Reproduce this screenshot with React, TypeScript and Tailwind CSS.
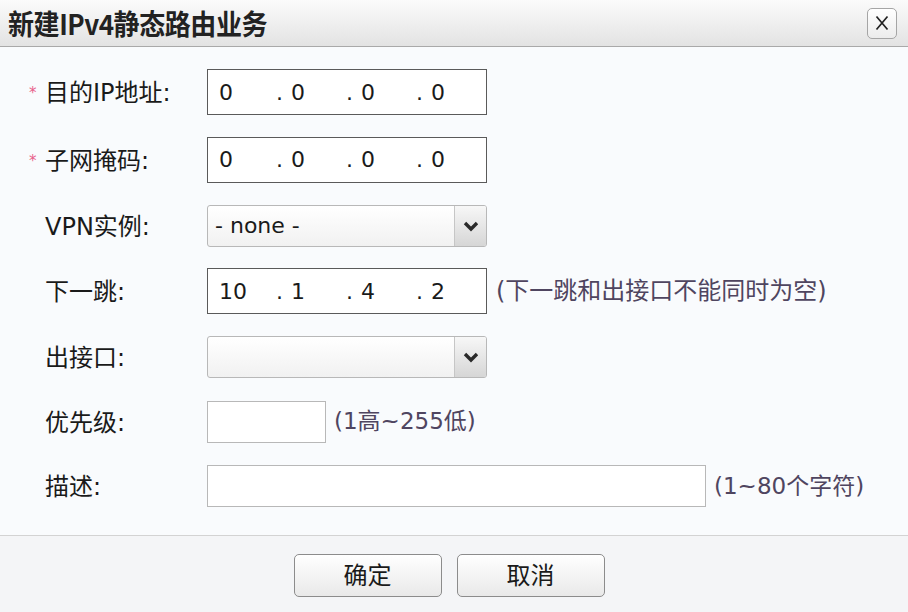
import React from "react";

const FONT = { fontFamily: '"DejaVu Sans", "Noto Sans CJK SC", sans-serif' };

function Chevron() {
  return (
    <svg width="16" height="12" viewBox="0 0 16 12">
      <path d="M2 3 L8 9 L14 3" fill="none" stroke="#2a2a2a" strokeWidth="3.4" strokeLinejoin="miter" />
    </svg>
  );
}

function IpInput({ parts }: { parts: string[] }) {
  return (
    <div className="flex h-[46px] w-[280px] items-center border border-[#5a5a5a] bg-white pl-[11px] text-[22px] text-[#1a1a1a]">
      <span className="w-[57px]">{parts[0]}</span>
      {parts.slice(1).map((p, i) => (
        <span key={i} className="flex w-[70px] items-center">
          <span className="w-[15px]">.</span>
          <span>{p}</span>
        </span>
      ))}
    </div>
  );
}

function Select({ value }: { value?: string }) {
  return (
    <div className="flex h-[42px] w-[280px] items-stretch overflow-hidden rounded-[3px] border border-[#b8b8b8] bg-gradient-to-b from-white to-[#f1f1f1]">
      <div className="flex flex-1 items-center pl-[7px] text-[22px] text-[#1a1a1a]">{value}</div>
      <div className="flex w-[32px] items-center justify-center border-l border-[#c6c6c6] bg-gradient-to-b from-[#f7f7f7] to-[#d6d6d6]">
        <Chevron />
      </div>
    </div>
  );
}

function Row({
  h,
  star,
  label,
  children,
}: {
  h: string;
  star?: boolean;
  label: string;
  children: React.ReactNode;
}) {
  return (
    <div className={`flex items-center ${h}`}>
      <div className="w-[17px] pl-[1px] pt-[3px] text-[15px] leading-none text-[#e8608a]">{star ? "*" : ""}</div>
      <div className="w-[162px] pt-[2px] text-[24px] text-[#1a1a1a]">{label}</div>
      {children}
    </div>
  );
}

export default function App() {
  return (
    <div className="flex h-[612px] w-[908px] flex-col bg-[#f9fbfd]" style={FONT}>
      <div className="flex h-[47px] items-center justify-between border-b border-[#a9a9a9] bg-gradient-to-b from-[#fbfbfb] to-[#e3e3e3] pl-[8px] pr-[11px]">
        <div className="origin-left scale-x-[0.93] whitespace-nowrap text-[28px] font-semibold tracking-[-0.5px] text-[#222]" style={{ fontFamily: '"Noto Sans CJK SC", sans-serif' }}>
          新建IPv4静态路由业务
        </div>
        <div className="flex h-[31px] w-[30px] items-center justify-center rounded-[5px] border border-[#a5a5a5] bg-gradient-to-b from-white to-[#ececec]">
          <svg width="14" height="16" viewBox="0 0 14 16">
            <path d="M1.5 1.5 L12.5 14.5 M12.5 1.5 L1.5 14.5" stroke="#222" strokeWidth="1.7" />
          </svg>
        </div>
      </div>
      <div className="flex flex-1 flex-col pl-[28px] pt-[11px]">
        <Row h="h-[68px]" star label="目的IP地址:">
          <IpInput parts={["0", "0", "0", "0"]} />
        </Row>
        <Row h="h-[67px]" star label="子网掩码:">
          <IpInput parts={["0", "0", "0", "0"]} />
        </Row>
        <Row h="h-[65px]" label="VPN实例:">
          <Select value="- none -" />
        </Row>
        <Row h="h-[66px]" label="下一跳:">
          <IpInput parts={["10", "1", "4", "2"]} />
          <span className="ml-[9px] text-[24px] text-[#4f4560]">(下一跳和出接口不能同时为空)</span>
        </Row>
        <Row h="h-[65px]" label="出接口:">
          <Select />
        </Row>
        <Row h="h-[65px]" label="优先级:">
          <div className="h-[42px] w-[119px] border border-[#b8b8b8] bg-white" />
          <span className="ml-[8px] text-[23px] text-[#4f4560]">(1高~255低)</span>
        </Row>
        <Row h="h-[64px]" label="描述:">
          <div className="h-[42px] w-[499px] border border-[#b8b8b8] bg-white" />
          <span className="ml-[8px] text-[23px] text-[#4f4560]">(1~80个字符)</span>
        </Row>
      </div>
      <div className="flex h-[77px] items-center justify-center gap-[15px] border-t border-[#d3d3d3] bg-[#f4f5f7] pr-[10px] pt-[3px]">
        <button className="h-[43px] w-[148px] rounded-[5px] border border-[#8c8c8c] bg-gradient-to-b from-white to-[#e9e9e9] text-[24px] text-[#1a1a1a]">
          确定
        </button>
        <button className="h-[43px] w-[148px] rounded-[5px] border border-[#8c8c8c] bg-gradient-to-b from-white to-[#e9e9e9] text-[24px] text-[#1a1a1a]">
          取消
        </button>
      </div>
    </div>
  );
}
